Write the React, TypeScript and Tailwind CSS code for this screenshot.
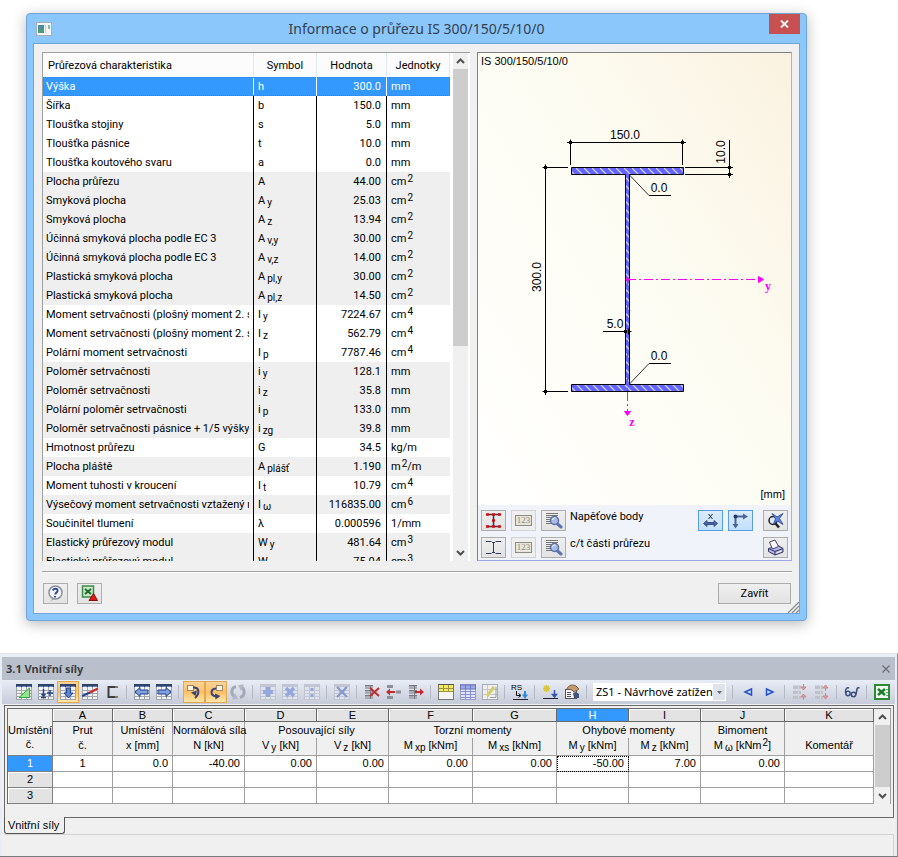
import type { ReactNode } from "react";

type Row = { name: string; sym: string; sub?: string; value: string; unit: string; sup?: string; tail?: string; shade?: boolean };

const rows: Row[] = [
  { name: "Výška", sym: "h", value: "300.0", unit: "mm" },
  { name: "Šířka", sym: "b", value: "150.0", unit: "mm" },
  { name: "Tloušťka stojiny", sym: "s", value: "5.0", unit: "mm" },
  { name: "Tloušťka pásnice", sym: "t", value: "10.0", unit: "mm" },
  { name: "Tloušťka koutového svaru", sym: "a", value: "0.0", unit: "mm" },
  { name: "Plocha průřezu", sym: "A", value: "44.00", unit: "cm", sup: "2", shade: true },
  { name: "Smyková plocha", sym: "A", sub: "y", value: "25.03", unit: "cm", sup: "2", shade: true },
  { name: "Smyková plocha", sym: "A", sub: "z", value: "13.94", unit: "cm", sup: "2", shade: true },
  { name: "Účinná smyková plocha podle EC 3", sym: "A", sub: "v,y", value: "30.00", unit: "cm", sup: "2", shade: true },
  { name: "Účinná smyková plocha podle EC 3", sym: "A", sub: "v,z", value: "14.00", unit: "cm", sup: "2", shade: true },
  { name: "Plastická smyková plocha", sym: "A", sub: "pl,y", value: "30.00", unit: "cm", sup: "2", shade: true },
  { name: "Plastická smyková plocha", sym: "A", sub: "pl,z", value: "14.50", unit: "cm", sup: "2", shade: true },
  { name: "Moment setrvačnosti (plošný moment 2. st", sym: "I", sub: "y", value: "7224.67", unit: "cm", sup: "4" },
  { name: "Moment setrvačnosti (plošný moment 2. st", sym: "I", sub: "z", value: "562.79", unit: "cm", sup: "4" },
  { name: "Polární moment setrvačnosti", sym: "I", sub: "p", value: "7787.46", unit: "cm", sup: "4" },
  { name: "Poloměr setrvačnosti", sym: "i", sub: "y", value: "128.1", unit: "mm", shade: true },
  { name: "Poloměr setrvačnosti", sym: "i", sub: "z", value: "35.8", unit: "mm", shade: true },
  { name: "Polární poloměr setrvačnosti", sym: "i", sub: "p", value: "133.0", unit: "mm", shade: true },
  { name: "Poloměr setrvačnosti pásnice + 1/5 výšky", sym: "i", sub: "zg", value: "39.8", unit: "mm", shade: true },
  { name: "Hmotnost průřezu", sym: "G", value: "34.5", unit: "kg/m" },
  { name: "Plocha pláště", sym: "A", sub: "plášť", value: "1.190", unit: "m", sup: "2", tail: "/m", shade: true },
  { name: "Moment tuhosti v kroucení", sym: "I", sub: "t", value: "10.79", unit: "cm", sup: "4" },
  { name: "Výsečový moment setrvačnosti vztažený n", sym: "I", sub: "ω", value: "116835.00", unit: "cm", sup: "6", shade: true },
  { name: "Součinitel tlumení", sym: "λ", value: "0.000596", unit: "1/mm" },
  { name: "Elastický průřezový modul", sym: "W", sub: "y", value: "481.64", unit: "cm", sup: "3", shade: true },
  { name: "Elastický průřezový modul", sym: "W", sub: "z", value: "75.04", unit: "cm", sup: "3", shade: true },
];

function Icon({ children, w = 16, h = 16 }: { children: ReactNode; w?: number; h?: number }) {
  return (
    <svg width={w} height={h} viewBox={`0 0 ${w} ${h}`} fill="none" aria-hidden="true" className="block shrink-0">
      {children}
    </svg>
  );
}

function Sub({ children }: { children: ReactNode }) {
  return <sub className="-bottom-[2px] ml-[2px] text-[10px]">{children}</sub>;
}

function Sup({ children }: { children: ReactNode }) {
  return <sup className="-top-[3px] ml-px text-[10px]">{children}</sup>;
}

function Chevron({ up, label }: { up?: boolean; label: string }) {
  return (
    <button aria-label={label} className="flex h-4 w-full shrink-0 items-center justify-center">
      <svg width="9" height="6" viewBox="0 0 9 6" fill="none" aria-hidden="true">
        <path d={up ? "M1 5 4.500 1.500 8 5" : "M1 1 4.500 4.500 8 1"} stroke="#505050" strokeWidth="2" />
      </svg>
    </button>
  );
}

/* ---------- cross-section information dialog ---------- */

function PropertyList() {
  return (
    <div className="flex h-[509px] min-w-0 flex-1 overflow-hidden border-t border-l border-[#a0a0a0] bg-white">
      <div className="min-w-0 flex-1">
        <table className="w-full table-fixed border-separate border-spacing-0">
          <colgroup>
            <col />
            <col className="w-[63px]" />
            <col className="w-[70px]" />
            <col className="w-[63px]" />
          </colgroup>
          <thead>
            <tr className="h-6 bg-[#fcfcfc]">
              <th className="border-r border-[#dfeaf7] p-0 pt-px pl-[5px] text-left font-normal">Průřezová charakteristika</th>
              <th className="border-r border-[#dfeaf7] p-0 pt-px text-center font-normal">Symbol</th>
              <th className="border-r border-[#dfeaf7] p-0 pt-px text-center font-normal">Hodnota</th>
              <th className="border-r border-[#dfeaf7] p-0 pt-px text-center font-normal">Jednotky</th>
            </tr>
          </thead>
          <tbody>
            {rows.map((r, i) => {
              const line = i === 0 ? "border-r border-white" : "border-r border-black";
              const tone =
                i === 0
                  ? "bg-[#3399ff] text-white outline-1 -outline-offset-1 outline-dotted outline-[#c8640a]"
                  : r.shade
                    ? "bg-[#efefef]"
                    : "bg-white";
              return (
                <tr key={i} className={`h-[19px] ${tone}`}>
                  <td className={`${line} p-0 pt-px pr-1 pl-[3px]`}>
                    <div className="overflow-hidden whitespace-nowrap">{r.name}</div>
                  </td>
                  <td className={`${line} p-0 pt-px pl-1 whitespace-nowrap`}>
                    {r.sym}
                    {r.sub && <Sub>{r.sub}</Sub>}
                  </td>
                  <td className={`${line} p-0 pt-px pr-[5px] text-right`}>{r.value}</td>
                  <td className="p-0 pt-px pl-1 whitespace-nowrap">
                    {r.unit}
                    {r.sup && <Sup>{r.sup}</Sup>}
                    {r.tail}
                  </td>
                </tr>
              );
            })}
          </tbody>
        </table>
      </div>
      <div className="mr-[2px] ml-[3px] flex w-[15px] flex-col bg-[#f0f0f0]">
        <Chevron up label="Nahoru" />
        <div className="h-[277px] bg-[#cdcdcd]" />
        <div className="flex-1" />
        <Chevron label="Dolů" />
      </div>
    </div>
  );
}

function Node({ x, y }: { x: number; y: number }) {
  return (
    <g stroke="#000">
      <path d={`M${x - 3} ${y}H${x + 3}M${x} ${y - 3}V${y + 3}`} />
      <rect x={x - 1.5} y={y - 1.5} width="3" height="3" fill="#000" stroke="none" />
    </g>
  );
}

function SectionDrawing() {
  return (
    <svg viewBox="478 53 313 452" className="block h-[452px] w-full" role="img" aria-label="Průřez IS 300/150/5/10/0">
      <defs>
        <pattern id="hatch" width="8" height="8" patternUnits="userSpaceOnUse">
          <rect width="8" height="8" fill="#6464ff" />
          <path d="M-1 -1 9 9" stroke="#dcdcff" strokeWidth="1.200" />
        </pattern>
      </defs>
      <g fill="url(#hatch)" stroke="#000">
        <path d="M571.500 167.500H683.500V174.500H629.500V384.500H683.500V391.500H571.500V384.500H625.500V174.500H571.500Z" />
      </g>
      <g stroke="#000" fill="none" shapeRendering="crispEdges">
        <path d="M567 142.500H686M570.500 142V165M682.500 142V165" />
        <path d="M543 167.500H568M543 391.500H568M545.500 165V395" />
        <path d="M685 167.500H733M685 174.500H733M729.500 140V178" />
        <path d="M649 195.500H671M649 363.500H671M603 331.500H631" />
      </g>
      <path d="M629.500 175 649 195.500M629.500 384 649 363.500" stroke="#333" />
      <Node x={570.5} y={142.5} />
      <Node x={682.5} y={142.5} />
      <Node x={545.5} y={167.5} />
      <Node x={545.5} y={391.5} />
      <Node x={729.5} y={167.5} />
      <Node x={729.5} y={174.5} />
      <Node x={625.5} y={331.5} />
      <Node x={628.5} y={331.5} />
      <g stroke="#ff00ff">
        <path d="M627 279.500H758M627.500 392V411" strokeDasharray="9 3 2 3" />
        <path d="M627.500 280V391" strokeDasharray="5 7" />
        <path d="M758.500 276.500V282.500L763.500 279.500ZM624.500 411.500H630.500L627.500 415.500Z" fill="#ff00ff" />
        <circle cx="627.500" cy="279.500" r="1.500" fill="#ff00ff" />
      </g>
      <g fontFamily="'Liberation Serif', serif" fontSize="12" fontWeight="700" fill="#ff00ff" textAnchor="middle">
        <text x="768" y="290">y</text>
        <text x="632" y="426">z</text>
      </g>
      <g fontFamily="'Liberation Sans', Arial, sans-serif" fontSize="11" fill="#000">
        <text x="481" y="65">IS 300/150/5/10/0</text>
        <text x="785" y="498" textAnchor="end">[mm]</text>
        <g fontSize="12" textAnchor="middle">
          <text x="625" y="139">150.0</text>
          <text x="659" y="192">0.0</text>
          <text x="659" y="360">0.0</text>
          <text x="615" y="328">5.0</text>
          <text transform="translate(541 277) rotate(-90)">300.0</text>
          <text transform="translate(725 152) rotate(-90)">10.0</text>
        </g>
      </g>
    </svg>
  );
}

const toolBtn = "flex h-[21px] w-[25px] items-center justify-center border border-[#adadad] bg-gradient-to-b from-[#efefef] to-[#e3e3e3]";
const toolBtnOff = "flex h-[21px] w-[25px] items-center justify-center border border-[#d2d2d2] bg-[#efefef]";
const toolBtnOn = "flex h-[21px] w-[25px] items-center justify-center border border-[#569de5] bg-gradient-to-b from-[#dbecfc] to-[#c4e0fc]";

function Digits() {
  return (
    <span className="flex h-[11px] w-[17px] items-center justify-center border border-[#8c8c80] bg-[#e6e6dc] font-['Liberation_Serif',serif] text-[9px] leading-none text-[#8c8c80]">
      123
    </span>
  );
}

function Lens() {
  return (
    <Icon w={18} h={17}>
      <path d="M1 1.500H13M1 3.500H13M1 5.500H7M1 7.500H6M1 9.500H6M1 11.500H7" stroke="#777" />
      <path d="M12 11.500 16 15" stroke="#5d73b4" strokeWidth="3" strokeLinecap="round" />
      <circle cx="9.500" cy="8.500" r="4" fill="#a9bde4" stroke="#5a70ae" strokeWidth="1.500" />
      <path d="M7.500 8a2.300 2.300 0 0 1 3-2" stroke="#fff" />
    </Icon>
  );
}

function ViewTools() {
  return (
    <div className="flex items-start bg-[#f0f4fa] pt-[5px] pr-[3px] pb-[2px] pl-[3px]">
      <div className="grid grid-cols-[25px_25px_25px] gap-x-[5px] gap-y-[6px]">
        <button className={toolBtn} aria-label="Zobrazit napěťové body">
          <Icon w={17} h={17}>
            <path d="M2 2.500H15M2 14.500H15M8.500 2V15" stroke="#2b3960" strokeWidth="1.500" />
            <path d="M1 2.500h3M13 2.500h3M7 2.500h3M7 8.500h3M7 14.500h3M1 14.500h3M13 14.500h3" stroke="#d01010" strokeWidth="2.500" />
          </Icon>
        </button>
        <button className={toolBtnOff} aria-label="Čísla napěťových bodů"><Digits /></button>
        <button className={toolBtn} aria-label="Detaily napěťových bodů"><Lens /></button>
        <button className={toolBtn} aria-label="Zobrazit c/t části">
          <Icon w={17} h={17}>
            <path d="M1 2.500H6.500M10.500 2.500H16M1 14.500H6.500M10.500 14.500H16M8.500 3V14M7 3.500H10M7 13.500H10" stroke="#333d63" />
          </Icon>
        </button>
        <button className={toolBtnOff} aria-label="Čísla c/t částí"><Digits /></button>
        <button className={toolBtn} aria-label="Detaily c/t částí"><Lens /></button>
      </div>
      <div className="flex-1 pt-px pl-1">
        <div className="h-[27px] leading-3">Napěťové body</div>
        <div className="leading-3">c/t části průřezu</div>
      </div>
      <div className="flex gap-[5px]">
        <button className={toolBtnOn} aria-label="Kóty">
          <Icon w={17} h={15}>
            <path d="M6.500 1 10.500 6M10.500 1 6.500 6" stroke="#222" />
            <path d="M1.500 10.500 5 7.500V9.500H12V7.500L15.500 10.500 12 13.500V11.500H5V13.500Z" fill="#4a63a0" stroke="#3a5390" />
          </Icon>
        </button>
        <button className={toolBtnOn} aria-label="Osy">
          <Icon w={17} h={16}>
            <path d="M2 3.500H12M3.500 3V12" stroke="#4a63a0" strokeWidth="2" />
            <path d="M11 .500 16 3.500 11 6.500ZM.500 11 3.500 15.500 6.500 11Z" fill="#4a63a0" />
            <circle cx="3.500" cy="3.500" r="2" fill="#24386a" />
          </Icon>
        </button>
      </div>
      <div className="ml-[10px] flex flex-col gap-[6px]">
        <button className={toolBtn} aria-label="Celý pohled">
          <Icon w={17} h={17}>
            <circle cx="6" cy="8.500" r="4" fill="#dfe8f7" stroke="#222" strokeWidth="1.500" />
            <path d="M8.500 11.500 12 15.500" stroke="#222" strokeWidth="2.500" />
            <path d="M5 1.500 10 5 16 1.500 12.500 6.500 16 12.500 10.500 9 6.500 12 8.500 7Z" fill="#5f86d8" stroke="#3557a8" />
          </Icon>
        </button>
        <button className={toolBtn} aria-label="Tisk">
          <Icon w={17} h={17}>
            <path d="M1.500 9.500 11 6.500 16 9.500V13L8 16 1.500 12.500Z" fill="#b4b4e4" stroke="#333366" />
            <path d="M1.500 9.500 8 12.500 16 9.500M8 12.500V16" stroke="#333366" />
            <path d="M2.500 3 8 1 11.500 7.500 5.500 10Z" fill="#fff" stroke="#444477" />
            <path d="M9.500 14 14.500 12" stroke="#fff" />
          </Icon>
        </button>
      </div>
    </div>
  );
}

function SectionDialog() {
  return (
    <section
      aria-label="Informace o průřezu"
      className="mt-[13px] mr-[91px] ml-[26px] rounded-[4px] border border-[#6ea6d8] bg-[#8cc7fb] px-[6px] pb-[6px] font-[Roboto,'DejaVu_Sans_Condensed',sans-serif] text-[11px] leading-[14px] text-black shadow-[0_3px_14px_rgba(0,0,0,0.28)]"
    >
      <header className="grid h-[29px] grid-cols-[40px_1fr_40px]">
        <div className="flex items-center pl-[3px]">
          <Icon w={16} h={14}>
            <rect x=".500" y=".500" width="15" height="13" fill="#f6f6f6" stroke="#a7adb3" />
            <rect x="2" y="3" width="6" height="8" fill="#4a8fa0" />
            <rect x="2" y="7" width="6" height="4" fill="#4c9b7c" />
            <path d="M9.500 3V11" stroke="#d0d0d0" />
            <rect x="12" y="3" width="2" height="4" fill="#7fc39a" />
          </Icon>
        </div>
        <h1 className="self-center text-center font-['Noto_Sans',sans-serif] text-[14px] leading-5 font-normal whitespace-nowrap text-[#33414f]">
          Informace o průřezu IS 300/150/5/10/0
        </h1>
        <button aria-label="Zavřít okno" className="flex h-5 w-[31px] items-center justify-center justify-self-end bg-[#c75050]">
          <Icon w={9} h={8}>
            <path d="M1 .500 8 7.500M8 .500 1 7.500" stroke="#fff" strokeWidth="1.800" />
          </Icon>
        </button>
      </header>
      <div className="border border-[#6ea6d8] bg-[#f0f0f0] pt-2 pr-[7px] pl-2">
        <div className="flex gap-[7px]">
          <PropertyList />
          <div className="w-[315px] shrink-0 border border-t-[#808080] border-r-[#aab0e4] border-b-[#a0a6e6] border-l-[#808080] bg-gradient-to-tr from-white via-[#fdfcf2] via-60% to-[#faf2e0]">
            <SectionDrawing />
            <ViewTools />
          </div>
        </div>
        <div className="mt-[10px] h-[2px] border-t border-[#a0a0a0] bg-white" />
        <footer className="flex items-start gap-[9px] pt-[10px] pr-px pl-px">
          <button className={toolBtn} aria-label="Nápověda">
            <Icon w={17} h={17}>
              <circle cx="8.500" cy="7.500" r="6.500" fill="#f4f5fa" stroke="#8a8f9e" strokeWidth="1.500" />
              <path d="M6 13 3.500 16 8 14" fill="#9a9eac" />
              <path d="M6 5.500C6.500 3 11 3 10.500 6 10.200 7.500 8.500 7.500 8.300 9.500M8 11V12.500" stroke="#34489a" strokeWidth="2" />
            </Icon>
          </button>
          <button className={toolBtn} aria-label="Export do Excelu">
            <Icon w={17} h={17}>
              <rect x="1.500" y="1" width="11" height="11" fill="#cfe6ca" stroke="#3a8a48" strokeWidth="1.500" />
              <path d="M4 4 10 9M10 4 4 9" stroke="#1c6d2b" strokeWidth="2" />
              <path d="M8 15.500 12.500 8.500 16.500 15.500Z" fill="#e01818" stroke="#8c0d0d" />
            </Icon>
          </button>
          <div className="flex-1" />
          <button className="h-[21px] w-[73px] border border-[#adadad] bg-gradient-to-b from-[#efefef] to-[#e3e3e3] pt-px text-center">
            Zavřít
          </button>
        </footer>
        <div className="-mr-[7px] flex h-[9px] items-end justify-end">
          <svg width="11" height="11" viewBox="0 0 11 11" aria-hidden="true" className="block shrink-0">
            <path d="M0 11 11 0M4 11 11 4M8 11 11 8" stroke="#8c8c8c" strokeWidth="1.300" />
          </svg>
        </div>
      </div>
    </section>
  );
}

/* ---------- internal forces table window ---------- */

function Grid({ children, pale }: { children?: ReactNode; pale?: boolean }) {
  const line = pale ? "#c2c6d2" : "#a2a6ae";
  return (
    <Icon>
      <rect x=".500" y=".500" width="15" height="15" fill={pale ? "#dfe3ec" : "#f2f2ee"} stroke={line} />
      <path d="M1 6.500H15M1 9.500H15M1 12.500H15M5.500 1V15M10.500 1V15" stroke={line} />
      <path d="M0 1.500H16" stroke={pale ? "#c2c6d2" : "#2f4268"} strokeWidth="3" />
      {!pale && <path d="M1 2.500H5M6 2.500H10M11 2.500H15" stroke="#6a86bd" />}
      {children}
    </Icon>
  );
}

function Rows({ children, pale }: { children?: ReactNode; pale?: boolean }) {
  return (
    <Icon>
      <path d="M1 3H9M1 8H9M1 13H9" stroke={pale ? "#bfc2ca" : "#a9acb2"} strokeWidth="4" />
      <path d="M1 1.500H9M1 6.500H9M1 11.500H9M6.500 1V15" stroke={pale ? "#d3d5dc" : "#77797e"} />
      {children}
    </Icon>
  );
}

function Tool({ label, on, children }: { label: string; on?: boolean; children: ReactNode }) {
  return (
    <button
      aria-label={label}
      className={`flex h-[22px] w-[22px] shrink-0 items-center justify-center ${on ? "border border-[#e0a850] bg-gradient-to-b from-[#fbd49a] via-[#ffbf62] to-[#ffe6a8]" : ""}`}
    >
      {children}
    </button>
  );
}

function Sep() {
  return <div className="mr-1 ml-[3px] h-[14px] w-px shrink-0 bg-[#b4b9c4]" />;
}

const arrowLeft = "M1 8 6 3.500V6H14V10H6V12.500Z";
const arrowRight = "M15 8 10 3.500V6H2V10H10V12.500Z";

function Toolbar() {
  return (
    <div className="flex h-6 items-center bg-gradient-to-b from-[#e9edf6] to-[#c6cbd9] pl-[11px]">
      <Tool label="Editor tabulky">
        <Grid><path d="M3 13.500 13.500 4V13.500Z" fill="#8ee88a" stroke="#3fa349" /></Grid>
      </Tool>
      <Tool label="Přidat řádky">
        <Grid><path d="M5.500 5V12M3 13.500H8M3.500 10 5.500 12 7.500 10M12 6V12M9 9H15" stroke="#24438f" strokeWidth="1.500" /></Grid>
      </Tool>
      <Tool label="Vyplnit dolů" on>
        <Grid><path d="M6.500 4H10.500V9H13L8.500 14 4 9H6.500Z" fill="#5f83cc" stroke="#24438f" /></Grid>
      </Tool>
      <Tool label="Interpolace">
        <Grid><path d="M0 12 8 8.500" stroke="#24438f" strokeWidth="2" /><path d="M8 8.500 16 4.500" stroke="#d82020" strokeWidth="2" /></Grid>
      </Tool>
      <Tool label="Profil">
        <Icon><path d="M11 3H4.500V13H11" stroke="#3f3f42" strokeWidth="2" /><path d="M11 3H14M11 13H14" stroke="#8b7a55" strokeWidth="2" /></Icon>
      </Tool>
      <Sep />
      <Tool label="Předchozí tabulka">
        <Grid><path d={arrowLeft} fill="#7f9fe0" stroke="#24438f" /></Grid>
      </Tool>
      <Tool label="Další tabulka">
        <Grid><path d={arrowRight} fill="#7f9fe0" stroke="#24438f" /></Grid>
      </Tool>
      <Sep />
      <Tool label="Zpět na výběr" on>
        <Icon>
          <rect x="1.500" y="1.500" width="6" height="5" fill="#fbf3df" stroke="#988a6a" />
          <path d="M7 3.500C13.500 3 14 9.500 9 14" stroke="#34447c" strokeWidth="2" />
          <path d="M5 8.500 11 6.500 9.500 12Z" fill="#34447c" />
        </Icon>
      </Tool>
      <Tool label="Výběr v grafice" on>
        <Icon>
          <rect x="8.500" y="1.500" width="6" height="5" fill="#fbf3df" stroke="#988a6a" />
          <path d="M8 4.500C2 5 2 11.500 8 12.500" stroke="#34447c" strokeWidth="2" />
          <path d="M12.500 12 7 9.500 7.500 15.500Z" fill="#34447c" />
        </Icon>
      </Tool>
      <Tool label="Obnovit">
        <Icon>
          <path d="M6 2.500A5.500 5.500 0 0 0 5.500 13M10 13.500A5.500 5.500 0 0 0 10.500 3" stroke="#a3a9b8" strokeWidth="3" />
          <path d="M5 9 8 15 2 15.500ZM11 7 8 1 14 .500Z" fill="#b3b9c8" />
        </Icon>
      </Tool>
      <Sep />
      <Tool label="Přičíst">
        <Grid pale><path d="M8 3V13M3 8H13" stroke="#94a8e0" strokeWidth="4" /></Grid>
      </Tool>
      <Tool label="Násobit">
        <Grid pale><path d="M4 4 12 12M12 4 4 12" stroke="#94a8e0" strokeWidth="3.500" /></Grid>
      </Tool>
      <Tool label="Dělit">
        <Grid pale><path d="M8 4V7M8 10V13" stroke="#94a8e0" strokeWidth="3" /></Grid>
      </Tool>
      <Sep />
      <Tool label="Smazat obsah">
        <Grid pale><path d="M3 3 13 13M13 3 3 13" stroke="#8797cc" strokeWidth="2" /></Grid>
      </Tool>
      <Sep />
      <Tool label="Smazat řádky">
        <Rows><path d="M6 4 15 12M15 4 6 12" stroke="#c22a2f" strokeWidth="2" /></Rows>
      </Tool>
      <Tool label="Vložit řádek">
        <Icon>
          <path d="M1 2.500H7M1 13.500H7M10 8H15" stroke="#8d9096" strokeWidth="3" />
          <path d="M0 8 4 4.500V7H9V9H4V11.500Z" fill="#c22a2f" />
        </Icon>
      </Tool>
      <Tool label="Odstranit řádek">
        <Rows><path d="M16 8 12 4.500V7H7V9H12V11.500Z" fill="#c22a2f" /></Rows>
      </Tool>
      <Sep />
      <Tool label="Barvy tabulky">
        <Icon>
          <rect x=".500" y=".500" width="15" height="15" fill="#f4f4f4" stroke="#777" />
          <path d="M1 4H15" stroke="#f2ea60" strokeWidth="6" />
          <path d="M1 4.500H15M1 7.500H15M5.500 1V7M10.500 1V7" stroke="#9c9640" />
          <path d="M0 .500H16" stroke="#555" />
        </Icon>
      </Tool>
      <Tool label="Zobrazit tabulku">
        <Icon>
          <rect x=".500" y=".500" width="15" height="15" fill="#dfe3fb" stroke="#9aa0c8" />
          <path d="M1 7.500H15M1 10.500H15M1 13.500H15M5.500 1V15M10.500 1V15" stroke="#8a92cc" />
          <path d="M0 3H16" stroke="#6a74b8" strokeWidth="5" />
          <path d="M1 3H5M6 3H10M11 3H15" stroke="#9da8e8" strokeWidth="3" />
        </Icon>
      </Tool>
      <Tool label="Upravit">
        <Icon>
          <rect x=".500" y=".500" width="15" height="15" fill="#eef0ee" stroke="#aab" />
          <path d="M1 5.500H15M1 10.500H15M5.500 1V15" stroke="#c3c6c9" />
          <path d="M5 12 12 3" stroke="#d8cc6a" strokeWidth="3" />
          <path d="M8 13.500H14V3" stroke="#97a0a8" />
        </Icon>
      </Tool>
      <Sep />
      <button aria-label="Výsledky RS" className="flex h-[22px] w-[22px] shrink-0 flex-col items-center justify-center">
        <span className="h-[7px] self-start pl-[2px] font-['Liberation_Sans',sans-serif] text-[8px] leading-[7px] text-black">RS</span>
        <Icon w={16} h={9}>
          <path d="M4.500 0V4.500H8M6.500 2.500 9 4.500 6.500 6.500" stroke="#111" />
          <path d="M13 -4V5" stroke="#2a8ae0" strokeWidth="2" />
          <path d="M10 3.500H16L13 8Z" fill="#2a8ae0" />
          <path d="M1 8.500H16" stroke="#223" />
        </Icon>
      </button>
      <Sep />
      <Tool label="Nový zatěžovací stav">
        <Icon>
          <path d="M1 4.500H8M4.500 1V8M2 2 7 7M7 2 2 7" stroke="#dcc530" strokeWidth="1.500" />
          <path d="M12.500 6V11M10.500 10.500 12.500 13 14.500 10.500Z" stroke="#3558a8" strokeWidth="1.500" fill="#3558a8" />
          <path d="M1 14.500H16" stroke="#223" />
        </Icon>
      </Tool>
      <Tool label="Vlastnosti">
        <Icon>
          <rect x="1.500" y="5.500" width="11" height="9" fill="#f4f4f4" stroke="#555" />
          <path d="M3 8.500H7M3 10.500H7M3 12.500H7" stroke="#555" />
          <path d="M3 5C4 1 9 0 12 2L15 5 10 8 8 6Z" fill="#c59a6c" stroke="#7c6045" />
          <path d="M9 9 12 8 15 10V14H10Z" fill="#3e557f" />
        </Icon>
      </Tool>
      <Sep />
      <div className="mr-[3px] ml-[2px] flex h-[18px] w-[133px] shrink-0 items-center bg-white">
        <select
          aria-label="Zatěžovací stav"
          className="h-[18px] min-w-0 flex-1 appearance-none bg-white pl-[3px] font-['Noto_Sans',sans-serif] text-[11px] leading-[18px] text-black"
        >
          <option>ZS1 - Návrhové zatížen</option>
        </select>
        <span aria-hidden="true" className="mr-px flex h-4 w-3 shrink-0 items-center justify-center bg-[#dfe3ec]">
          <svg width="5" height="3" viewBox="0 0 5 3"><path d="M0 0H5L2.500 3Z" fill="#666" /></svg>
        </span>
      </div>
      <Sep />
      <Tool label="Předchozí stav">
        <Icon><path d="M11.500 5 5 8 11.500 11Z" fill="#cfe0ff" stroke="#2450c4" strokeWidth="1.500" /></Icon>
      </Tool>
      <Tool label="Další stav">
        <Icon><path d="M4.500 5 11 8 4.500 11Z" fill="#cfe0ff" stroke="#2450c4" strokeWidth="1.500" /></Icon>
      </Tool>
      <Sep />
      <Tool label="Sbalit řádky">
        <Rows pale><path d="M11.500 0V3M11.500 13V16M9 3H14L11.500 6ZM9 13H14L11.500 10Z" fill="#e2a3a8" stroke="#cf8288" /></Rows>
      </Tool>
      <Tool label="Rozbalit řádky">
        <Rows pale><path d="M11.500 4V7M11.500 9V12M9 4H14L11.500 1ZM9 12H14L11.500 15Z" fill="#e2a3a8" stroke="#cf8288" /></Rows>
      </Tool>
      <Sep />
      <Tool label="Zobrazit vše">
        <Icon>
          <circle cx="4" cy="9.500" r="2.200" stroke="#3c4d80" strokeWidth="1.500" />
          <circle cx="9.500" cy="10.500" r="2.200" stroke="#3c4d80" strokeWidth="1.500" />
          <path d="M1.500 9C1 5 3 3 5 4M12 10.500 13 5C13.500 3.500 14.500 3.500 15.500 4" stroke="#3c4d80" strokeWidth="1.500" />
        </Icon>
      </Tool>
      <Sep />
      <Tool label="Export do Excelu">
        <Icon>
          <rect x="1" y="1" width="14" height="14" fill="#f3faf1" stroke="#2c8c36" strokeWidth="2" />
          <path d="M4 5 11 11M11 5 4 11" stroke="#1f7a2c" strokeWidth="2.500" />
          <path d="M12 5.500H14M12 8.500H14M12 11.500H14" stroke="#5cae62" />
        </Icon>
      </Tool>
    </div>
  );
}

const letters = ["A", "B", "C", "D", "E", "F", "G", "H", "I", "J", "K"];
const units: { base: string; sub?: string; unit?: string; sup?: string }[] = [
  { base: "č." },
  { base: "x", unit: "[mm]" },
  { base: "N", unit: "[kN]" },
  { base: "V", sub: "y", unit: "[kN]" },
  { base: "V", sub: "z", unit: "[kN]" },
  { base: "M", sub: "xp", unit: "[kNm]" },
  { base: "M", sub: "xs", unit: "[kNm]" },
  { base: "M", sub: "y", unit: "[kNm]" },
  { base: "M", sub: "z", unit: "[kNm]" },
  { base: "M", sub: "ω", unit: "[kNm", sup: "2" },
  { base: "Komentář" },
];
const values = ["1", "0.0", "-40.00", "0.00", "0.00", "0.00", "0.00", "-50.00", "7.00", "0.00", ""];
const blank = letters.map(() => "");

const capCell = "border-r border-[#a0a0a0] p-0 text-center font-normal";

function ForcesTable() {
  return (
    <div className="flex border-t border-l border-[#696969]">
      <table className="w-full min-w-0 flex-1 table-fixed border-separate border-spacing-0 text-[11px] leading-[15px]">
        <colgroup>
          <col className="w-[45px]" />
          <col className="w-[60px]" />
          <col className="w-[60px]" />
          <col className="w-[72px]" />
          <col className="w-[72px]" />
          <col className="w-[72px]" />
          <col className="w-[84px]" />
          <col className="w-[84px]" />
          <col className="w-[72px]" />
          <col className="w-[72px]" />
          <col className="w-[84px]" />
          <col />
        </colgroup>
        <thead>
          <tr className="h-[13px]">
            <th rowSpan={3} className="border-r border-b border-[#808080] p-0 pt-[14px] text-center align-top leading-[14px] font-normal">
              Umístění
              <br />
              č.
            </th>
            {letters.map((l) => (
              <th
                key={l}
                className={`border-r border-b border-[#696969] p-0 text-center leading-[12px] font-normal ${l === "H" ? "bg-[#3399ff] text-white" : "bg-[#e3e3e3] shadow-[inset_1px_1px_0_#fff]"}`}
              >
                {l}
              </th>
            ))}
          </tr>
          <tr className="h-4">
            <th className={capCell}>Prut</th>
            <th className={capCell}>Umístění</th>
            <th className={`${capCell} whitespace-nowrap`}>Normálová síla</th>
            <th className={capCell} colSpan={2}>Posouvající síly</th>
            <th className={capCell} colSpan={2}>Torzní momenty</th>
            <th className={capCell} colSpan={2}>Ohybové momenty</th>
            <th className={capCell}>Bimoment</th>
            <th className={capCell} />
          </tr>
          <tr className="h-[18px]">
            {units.map((u, i) => (
              <th key={i} className="border-r border-b border-[#a0a0a0] p-0 text-center align-top font-normal whitespace-nowrap">
                {u.base}
                {u.sub && <Sub>{u.sub}</Sub>}
                {u.unit && ` ${u.unit}`}
                {u.sup && <><Sup>{u.sup}</Sup>]</>}
              </th>
            ))}
          </tr>
        </thead>
        <tbody>
          {[values, blank, blank].map((cells, r) => (
            <tr key={r} className="h-4">
              <th
                scope="row"
                className={`border-r border-b border-[#808080] p-0 text-center font-normal ${r === 0 ? "bg-[#3399ff] text-white" : "bg-[#e3e3e3] shadow-[inset_1px_1px_0_#fff]"}`}
              >
                {r + 1}
              </th>
              {cells.map((v, i) => (
                <td
                  key={i}
                  className={`border-r border-b border-[#a0a0a0] bg-white p-0 ${i === 0 ? "text-center" : "pr-1 text-right"} ${r === 0 && i === 7 ? "outline-1 -outline-offset-1 outline-dotted outline-black" : ""}`}
                >
                  {v}
                </td>
              ))}
            </tr>
          ))}
        </tbody>
      </table>
      <div className="flex w-[17px] shrink-0 flex-col border-r border-[#a0a0a0] pl-px">
        <Chevron up label="Posunout nahoru" />
        <div className="h-[62px] bg-[#cdcdcd]" />
        <div className="flex-1" />
        <Chevron label="Posunout dolů" />
      </div>
    </div>
  );
}

function ForcesWindow() {
  return (
    <section
      aria-label="Vnitřní síly"
      className="mt-8 border-t border-r border-b border-t-[#e2e2e2] border-r-[#8a8a8e] border-b-[#77777c] bg-[#e9edf5] px-[2px] pt-[3px] font-['Liberation_Sans',Arial,sans-serif]"
    >
      <header className="flex h-[23px] items-center justify-between bg-[#b9c0cb] pr-[5px] pl-1">
        <h2 className="font-['Noto_Sans',sans-serif] text-[11px] leading-4 font-bold text-[#3c3c40]">3.1 Vnitřní síly</h2>
        <button aria-label="Zavřít panel">
          <Icon w={8} h={8}><path d="M.500 .500 7.500 7.500M7.500 .500 .500 7.500" stroke="#6a6e76" strokeWidth="1.200" /></Icon>
        </button>
      </header>
      <Toolbar />
      <div className="bg-[#f0f0f0] pt-px pr-px pl-[2px]">
        <div className="border border-[#696969] pt-[2px] pr-[2px] pb-[13px] pl-[2px]">
          <ForcesTable />
        </div>
        <div className="flex">
          <button className="-mt-px h-[17px] rounded-b-[3px] border-r border-b border-l border-[#555] bg-[#f0f0f0] pr-[5px] pl-[3px] text-[11px] leading-[15px] text-black">
            Vnitřní síly
          </button>
        </div>
        <div className="h-[22px] border-t border-r border-[#d2d2d2]" />
      </div>
    </section>
  );
}

export default function App() {
  return (
    <main className="min-h-screen overflow-hidden bg-white">
      <SectionDialog />
      <ForcesWindow />
    </main>
  );
}
